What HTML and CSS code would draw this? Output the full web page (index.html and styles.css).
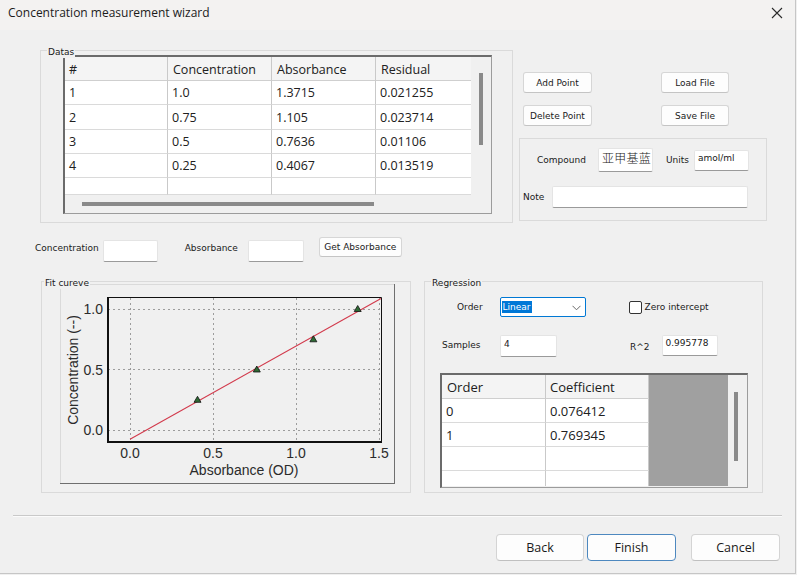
FILE: index.html
```html
<!DOCTYPE html>
<html>
<head>
<meta charset="utf-8">
<title>Concentration measurement wizard</title>
<link rel="stylesheet" href="styles.css">
</head>
<body>
<div class="window">
  <div class="titlebar">
    <span class="title">Concentration measurement wizard</span>
    <svg class="close" width="12" height="12" viewBox="0 0 12 12"><path d="M1 1 L11 11 M11 1 L1 11" stroke="#2a2a2a" stroke-width="1.1" fill="none"/></svg>
  </div>

  <div class="top">
    <div class="group datas">
      <span class="legend">Datas</span>
      <div class="dtable">
        <div class="dt-cells">
          <div class="hc">#</div><div class="hc">Concentration</div><div class="hc">Absorbance</div><div class="hc last">Residual</div>
          <div class="c">1</div><div class="c">1.0</div><div class="c">1.3715</div><div class="c last">0.021255</div>
          <div class="c">2</div><div class="c">0.75</div><div class="c">1.105</div><div class="c last">0.023714</div>
          <div class="c">3</div><div class="c">0.5</div><div class="c">0.7636</div><div class="c last">0.01106</div>
          <div class="c">4</div><div class="c">0.25</div><div class="c">0.4067</div><div class="c last">0.013519</div>
          <div class="c"></div><div class="c"></div><div class="c"></div><div class="c last"></div>
        </div>
        <div class="dt-vscroll"><div class="thumb-v dt-tv"></div></div>
        <div class="dt-hscroll"><div class="thumb-h"></div></div>
      </div>
    </div>

    <div class="rightcol">
      <div class="btngrid">
        <button class="wbtn">Add Point</button>
        <button class="wbtn b2">Load File</button>
        <button class="wbtn">Delete Point</button>
        <button class="wbtn b2">Save File</button>
      </div>
      <div class="compound">
        <div class="crow1">
          <span class="lbl">Compound</span>
          <div class="edit cmp">亚甲基蓝</div>
          <span class="lbl units">Units</span>
          <div class="edit unitbox">amol/ml</div>
        </div>
        <div class="crow2">
          <span class="lbl">Note</span>
          <div class="edit note"></div>
        </div>
      </div>
    </div>
  </div>

  <div class="mid">
    <span class="lbl ml">Concentration</span>
    <div class="edit mbox b1"></div>
    <span class="lbl ml l2">Absorbance</span>
    <div class="edit mbox b2"></div>
    <button class="wbtn getabs">Get Absorbance</button>
  </div>

  <div class="bottom">
    <div class="group fit">
      <span class="legend fitlg">Fit cureve</span>
      <svg class="chart" width="335" height="200" viewBox="0 0 335 200">
        <line x1="0.5" y1="0" x2="0.5" y2="199" stroke="#dadada"/>
        <line x1="0" y1="0.5" x2="335" y2="0.5" stroke="#dadada"/>
        <line x1="334.5" y1="0" x2="334.5" y2="200" stroke="#6f6f6f"/>
        <line x1="0" y1="199.5" x2="335" y2="199.5" stroke="#6f6f6f"/>
        <g stroke="#9c9c9c" stroke-width="1" stroke-dasharray="2 3">
          <line x1="70.5" y1="14" x2="70.5" y2="157"/>
          <line x1="153.5" y1="14" x2="153.5" y2="157"/>
          <line x1="236.5" y1="14" x2="236.5" y2="157"/>
          <line x1="319.5" y1="14" x2="319.5" y2="157"/>
          <line x1="48" y1="25.5" x2="321" y2="25.5"/>
          <line x1="48" y1="85.5" x2="321" y2="85.5"/>
          <line x1="48" y1="146.5" x2="321" y2="146.5"/>
        </g>
        <path d="M47.5 13.5 H321.5 V158" stroke="#111" stroke-width="1" fill="none"/>
        <path d="M48 13 V158 H322" stroke="#111" stroke-width="2" fill="none"/>
        <line x1="70" y1="155.2" x2="321" y2="14.5" stroke="#d23a4c" stroke-width="1.1"/>
        <g fill="#2f6b35" stroke="#111" stroke-width="0.8">
          <polygon points="137.5,112.3 134,118.3 141,118.3"/>
          <polygon points="196.8,82 193.3,88 200.3,88"/>
          <polygon points="253.4,51.8 249.9,57.8 256.9,57.8"/>
          <polygon points="297.7,21.5 294.2,27.5 301.2,27.5"/>
        </g>
        <g class="ax" font-family="Liberation Sans, Arial, sans-serif" font-size="14" fill="#2b2b2b">
          <text x="43" y="30" text-anchor="end">1.0</text>
          <text x="43" y="90.5" text-anchor="end">0.5</text>
          <text x="43" y="151" text-anchor="end">0.0</text>
          <text x="70" y="174" text-anchor="middle">0.0</text>
          <text x="153" y="174" text-anchor="middle">0.5</text>
          <text x="236" y="174" text-anchor="middle">1.0</text>
          <text x="319" y="174" text-anchor="middle">1.5</text>
          <text x="184" y="191" text-anchor="middle">Absorbance (OD)</text>
          <text transform="translate(18,86) rotate(-90)" text-anchor="middle">Concentration (--)</text>
        </g>
      </svg>
    </div>

    <div class="group reg">
      <span class="legend">Regression</span>
      <div class="rrow1">
        <span class="lbl">Order</span>
        <div class="combo"><span class="sel">Linear</span>
          <svg class="chev" width="9" height="6" viewBox="0 0 9 6"><path d="M0.5 0.8 L4.5 4.8 L8.5 0.8" stroke="#6a6a6a" stroke-width="1" fill="none"/></svg>
        </div>
        <span class="check"></span>
        <span class="lbl zi">Zero intercept</span>
      </div>
      <div class="rrow2">
        <span class="lbl samples">Samples</span>
        <div class="edit sbox">4</div>
        <span class="lbl r2">R^2</span>
        <div class="edit rbox">0.995778</div>
      </div>
      <div class="ctable">
        <div class="ct-cells">
          <div class="hc">Order</div><div class="hc">Coefficient</div>
          <div class="c">0</div><div class="c">0.076412</div>
          <div class="c">1</div><div class="c">0.769345</div>
          <div class="c"></div><div class="c"></div>
          <div class="c"></div><div class="c"></div>
        </div>
        <div class="ct-gray"></div>
        <div class="ct-vscroll"><div class="thumb-v ct-tv"></div></div>
      </div>
    </div>
  </div>

  <div class="sep"></div>

  <div class="footer">
    <button class="fbtn">Back</button>
    <button class="fbtn finish">Finish</button>
    <button class="fbtn cancel">Cancel</button>
  </div>
</div>
</body>
</html>
```

FILE: styles.css
```css
* { box-sizing: border-box; }
html, body { margin: 0; padding: 0; }
body {
  background: #f0f0f0;
  font-family: "DejaVu Sans", sans-serif;
  font-size: 9px;
  color: #1a1a1a;
  width: 797px;
  height: 575px;
  overflow: hidden;
}
.window {
  width: 796px;
  height: 574px;
  border-right: 1px solid #c6c6c6;
  border-bottom: 1px solid #c6c6c6;
  display: flex;
  flex-direction: column;
}
.titlebar {
  height: 30px;
  background: #f3f2f1;
  display: flex;
  justify-content: space-between;
  align-items: flex-start;
  padding: 5px 12px 0 8px;
  flex: none;
}
.title {
  font-family: "Open Sans", sans-serif;
  font-size: 12px;
  line-height: 16px;
  color: #1b1b1b;
}
.close { margin-top: 2px; }

.lbl { white-space: nowrap; line-height: 11px; }
.legend {
  position: absolute;
  background: #f0f0f0;
  left: 6px;
  top: -4px;
  padding: 0 1px;
  line-height: 11px;
  z-index: 2;
}
.group {
  position: relative;
  border: 1px solid #dadada;
  flex: none;
}

/* top */
.top {
  display: flex;
  margin-top: 20px;
  padding-left: 40px;
  flex: none;
}
.datas {
  width: 473px;
  height: 173px;
  padding: 4px 0 0 22px;
}
.dtable {
  width: 429px;
  height: 159px;
  border-left: 2px solid #6b6b6b;
  border-top: 2px solid #6b6b6b;
  border-right: 1px solid #9c9c9c;
  border-bottom: 1px solid #9c9c9c;
  background: #f0f0f0;
  display: grid;
  grid-template-columns: 406px 20px;
  grid-template-rows: 138px 18px;
}
.dt-cells {
  display: grid;
  grid-template-columns: 103px 104px 104px 95px;
  grid-template-rows: 24px 24px 25px 24px 24px 17px;
  background: #fff;
  overflow: hidden;
  font-family: "Open Sans", sans-serif;
  font-size: 12.5px;
  color: #202020;
}
.hc, .c {
  display: flex;
  align-items: center;
  padding-left: 4px;
  border-right: 1px solid #c9c9c9;
  border-bottom: 1px solid #dadada;
  white-space: nowrap;
}
.hc { background: #f4f4f4; border-bottom-color: #cfcfcf; padding-top: 1px; }
.dt-cells .hc:nth-child(2), .dt-cells .hc:nth-child(3), .dt-cells .hc:nth-child(4) { padding-left: 5px; }
.dt-cells .last { border-right: none; }
.dt-vscroll { padding: 16px 0 0 8px; }
.thumb-v { width: 4px; background: #8a8a8a; }
.dt-tv { height: 72px; }
.dt-hscroll { grid-column: 1 / 3; padding: 7px 0 0 17px; }
.thumb-h { width: 292px; height: 4px; background: #8a8a8a; }

.rightcol {
  margin-left: 6px;
  width: 248px;
  display: flex;
  flex-direction: column;
}
.btngrid {
  display: grid;
  grid-template-columns: 69px 68px;
  grid-auto-rows: 21px;
  column-gap: 69px;
  row-gap: 12px;
  padding-left: 4px;
  margin-top: 22px;
}
.wbtn {
  font-family: "DejaVu Sans", sans-serif;
  font-size: 9px;
  color: #1a1a1a;
  background: #fdfdfd;
  border: 1px solid #d6d6d6;
  border-bottom-color: #c4c4c4;
  border-radius: 3px;
  padding: 0;
  margin: 0;
  white-space: nowrap;
}
.compound {
  margin-top: 12px;
  height: 83px;
  border: 1px solid #dadada;
  padding-left: 3px;
}
.crow1 {
  display: flex;
  align-items: center;
  margin-top: 9px;
  padding-left: 14px;
  height: 24px;
}
.edit {
  background: #fff;
  border: 1px solid #e4e4e4;
  border-bottom-color: #9a9a9a;
  border-radius: 2px;
  flex: none;
}
.cmp {
  margin-left: 12px;
  width: 55px;
  height: 24px;
  font-family: "Noto Sans CJK SC", sans-serif;
  font-size: 12px;
  font-weight: 300;
  line-height: 18px;
  padding-left: 3px;
  letter-spacing: 0.3px;
  color: #1a1a1a;
}
.units { margin-left: 13px; }
.unitbox {
  margin-left: 5px;
  width: 55px;
  height: 21px;
  padding: 2px 0 0 3px;
  line-height: 11px;
}
.crow2 {
  display: flex;
  align-items: center;
  margin-top: 14px;
  height: 22px;
}
.note {
  margin-left: 8px;
  width: 196px;
  height: 22px;
}

/* mid */
.mid {
  display: flex;
  align-items: flex-start;
  margin-top: 13px;
  padding-left: 35px;
  flex: none;
}
.ml { margin-top: 7px; }
.mbox { width: 55px; height: 22px; margin-top: 4px; }
.mid .b1 { margin-left: 4px; }
.mid .l2 { margin-left: 27px; }
.mid .b2 { margin-left: 10px; width: 56px; }
.getabs { margin-left: 15px; width: 83px; height: 20px; margin-top: 1px; }

/* bottom */
.bottom {
  display: flex;
  margin-top: 19px;
  padding-left: 41px;
  flex: none;
}
.fit {
  width: 370px;
  height: 212px;
  padding: 2px 0 0 18px;
}
.fitlg { left: 2px; }
.chart { display: block; }
.reg {
  margin-left: 13px;
  width: 339px;
  height: 212px;
}
.rrow1 {
  display: flex;
  align-items: center;
  margin-top: 15px;
  padding-left: 32px;
  height: 20px;
}
.combo {
  margin-left: 17px;
  width: 86px;
  height: 20px;
  background: #fff;
  border: 1px solid #0078d4;
  border-radius: 2px;
  display: flex;
  align-items: center;
  justify-content: space-between;
  padding: 0 4px 0 1px;
}
.sel {
  background: #0078d7;
  color: #fff;
  line-height: 12px;
  padding: 0 1px;
}
.chev { margin-top: 1px; }
.check {
  margin-left: 43px;
  width: 13px;
  height: 13px;
  border: 1px solid #333;
  border-radius: 2px;
  background: #fff;
  flex: none;
}
.zi { margin-left: 3px; }
.rrow2 {
  display: flex;
  align-items: center;
  margin-top: 17px;
  padding-left: 17px;
  height: 23px;
}
.samples { width: 39px; display: block; }
.sbox { margin-left: 19px; width: 57px; height: 22px; padding: 3px 0 0 3px; line-height: 11px; }
.r2 { margin-left: 73px; margin-top: 3px; }
.rbox { margin-left: 12px; width: 56px; height: 21px; padding: 2px 0 0 3px; line-height: 11px; margin-top: -1px; }
.ctable {
  margin: 16px 0 0 15px;
  width: 308px;
  height: 115px;
  border-left: 2px solid #6b6b6b;
  border-top: 2px solid #6b6b6b;
  border-right: 1px solid #9c9c9c;
  border-bottom: 1px solid #9c9c9c;
  background: #f0f0f0;
  display: flex;
}
.ct-cells {
  width: 207px;
  display: grid;
  grid-template-columns: 104px 103px;
  grid-template-rows: 24px 24px 24px 24px 16px;
  background: #fff;
  overflow: hidden;
  font-family: "Open Sans", sans-serif;
  font-size: 13px;
  color: #202020;
  align-self: flex-start;
  height: 111px;
}
.ct-cells .hc:first-child { padding-left: 5px; }
.ct-gray { width: 79px; height: 111px; background: #a0a0a0; }
.ct-vscroll { padding: 17px 0 0 6px; }
.ct-tv { height: 69px; }

.sep {
  margin: 22px 0 0 13px;
  width: 769px;
  border-top: 1px solid #c9c9c9;
  border-bottom: 1px solid #fbfbfb;
  flex: none;
}
.footer {
  display: flex;
  justify-content: flex-end;
  margin-top: 17px;
  padding-right: 15px;
  flex: none;
}
.fbtn {
  font-family: "Open Sans", sans-serif;
  font-size: 12.5px;
  color: #1a1a1a;
  width: 88px;
  height: 27px;
  background: #fdfdfd;
  border: 1px solid #d4d4d4;
  border-bottom-color: #c0c0c0;
  border-radius: 4px;
  padding: 0;
  margin: 0;
}
.finish { margin-left: 3px; width: 89px; border: 1px solid #4d88bf; }
.cancel { margin-left: 15px; width: 89px; }
```
